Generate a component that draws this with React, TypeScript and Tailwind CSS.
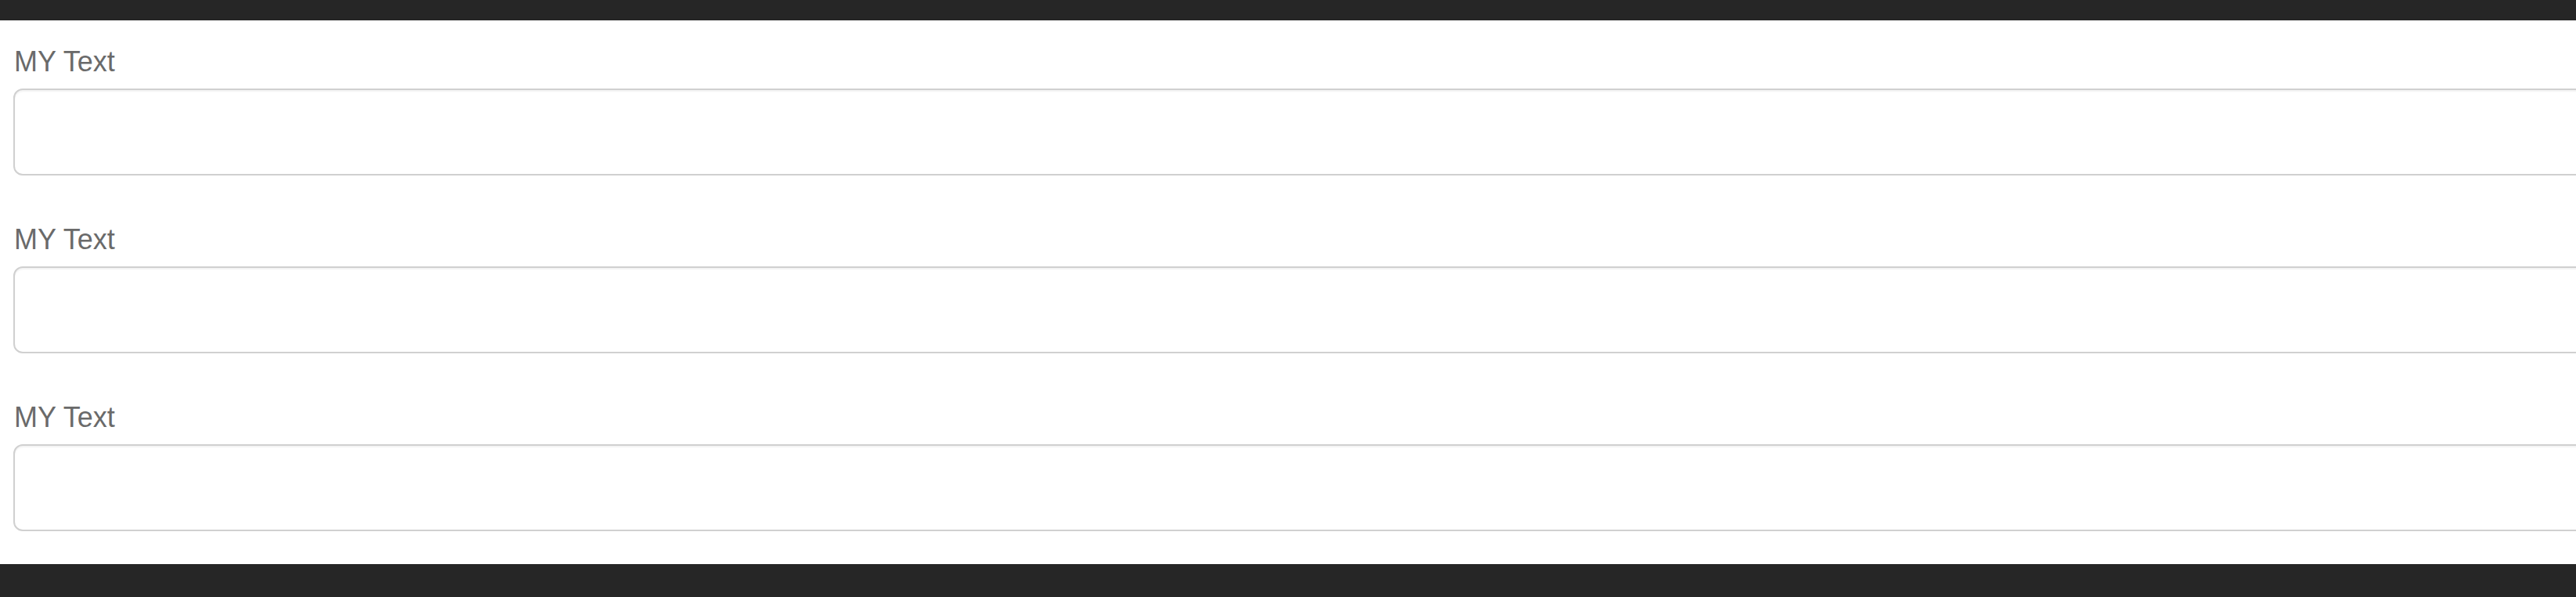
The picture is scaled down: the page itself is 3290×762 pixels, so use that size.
import React from 'react';

const fields = ['MY Text', 'MY Text', 'MY Text'];

const App: React.FC = () => {
  return (
    <div className="w-[3290px] h-[762px] flex flex-col bg-white overflow-hidden font-['Liberation_Sans',Arial,sans-serif]">
      {/* top strip */}
      <div className="h-[26px] shrink-0 bg-[#262626]" />

      <main className="flex-1 pt-[33px] pl-[17px] overflow-hidden">
        {fields.map((label, i) => (
          <div key={i} className={i < fields.length - 1 ? 'mb-[62px]' : ''}>
            <label className="block pl-px text-[36px] leading-[40px] text-[#6a6a6a] mb-[14px]">{label}</label>
            <input
              type="text"
              className="block w-[3340px] h-[111px] rounded-[12px] border-2 border-[#d0d0d0] bg-white shadow-[inset_0_2px_2px_rgba(0,0,0,0.05)] outline-none"
            />
          </div>
        ))}
      </main>

      {/* bottom strip */}
      <div className="h-[42px] shrink-0 bg-[#262626]" />
    </div>
  );
};

export default App;
